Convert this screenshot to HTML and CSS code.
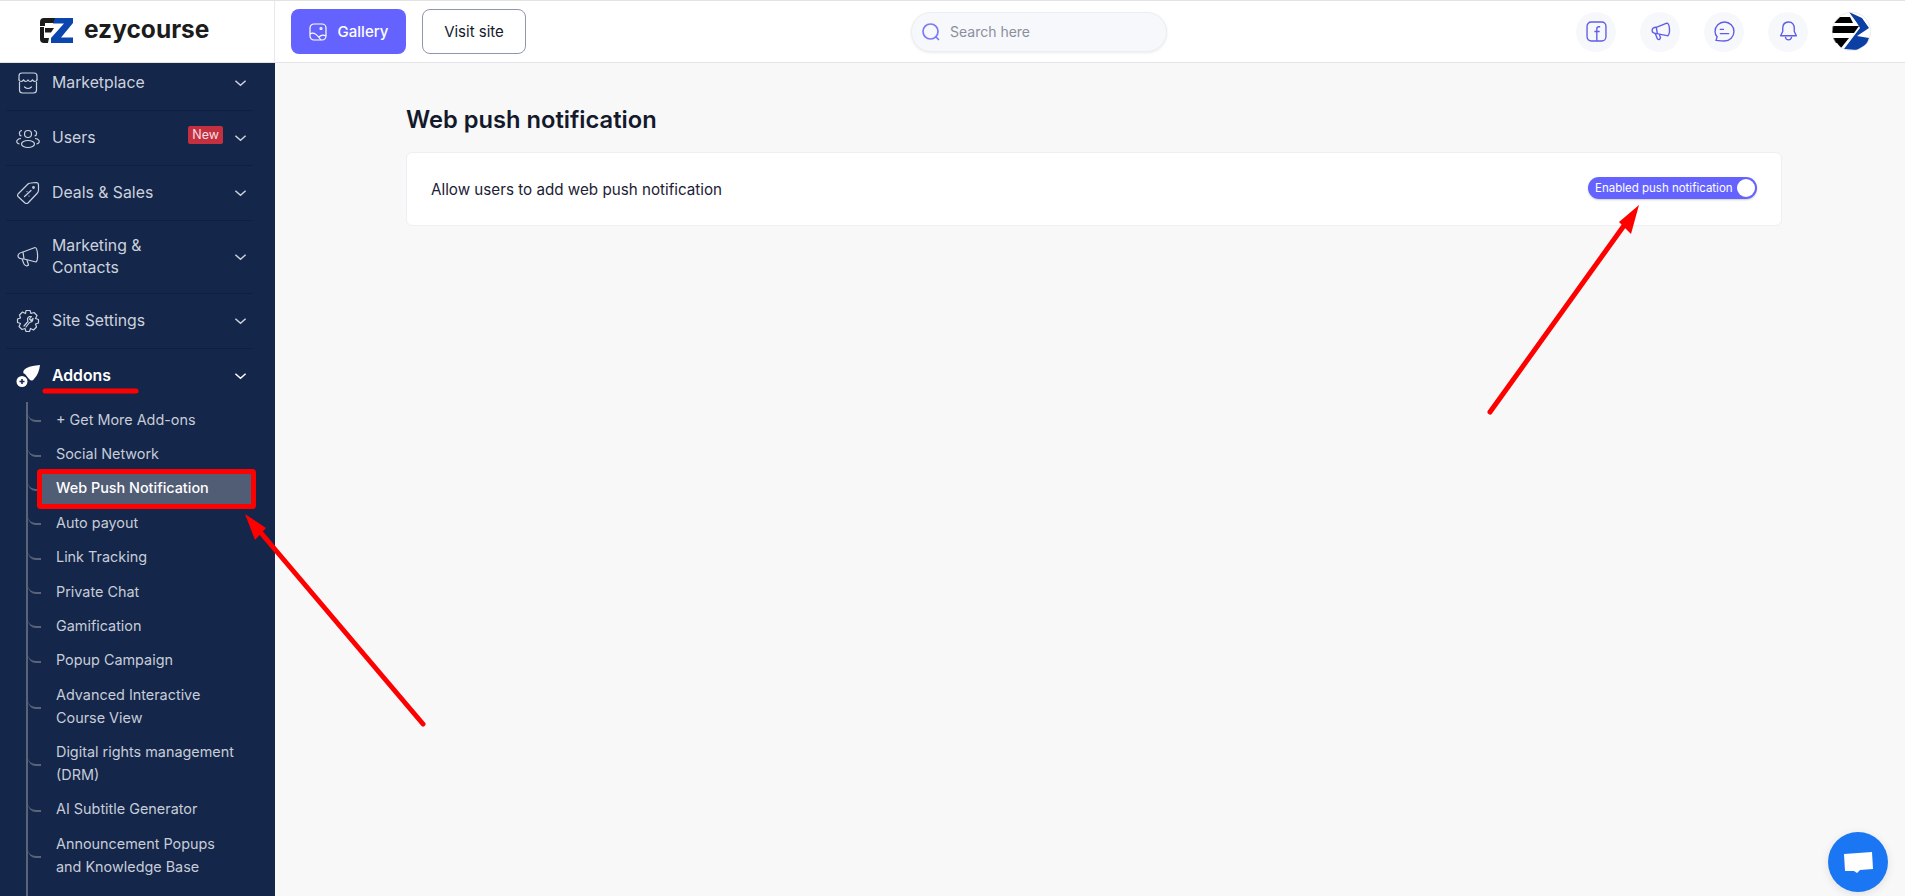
FILE: index.html
```html
<!DOCTYPE html>
<html lang="en">
<head>
    <meta charset="UTF-8">
    <meta name="viewport" content="width=device-width, initial-scale=1.0">
    <title>Web push notification</title>
    <link rel="stylesheet" href="styles.css">
</head>
<body>
    <header class="topbar">
        <div class="brand">
            <svg class="brand-mark" width="34" height="25" viewBox="0 0 34 25">
                <path d="M4 0H17L14 5H5V8H0V4Q0 0 4 0Z" fill="#1c1c1c"/>
                <path d="M5 10H14L11 14.500H5Z" fill="#1c1c1c"/>
                <path d="M0 9H4V20H9L8 25H4Q0 25 0 21Z" fill="#1c1c1c"/>
                <path d="M15 0H33V5L21 19.500H33V25H11V20L24 5.500H13Z" fill="#0b46ae"/>
            </svg>
            <span class="brand-name">ezycourse</span>
        </div>
        <a class="btn btn-primary">
            <svg width="18" height="18" viewBox="0 0 18 18" fill="none" stroke="#fff" stroke-width="1.2">
                <rect x="1" y="1" width="16" height="16" rx="4"/>
                <circle cx="12" cy="5.5" r="1"/>
                <path d="M1 11C5 8 9 13 12 17M10 14C12 12 15 12 17 13"/>
            </svg>
            Gallery
        </a>
        <a class="btn btn-outline">Visit site</a>
        <div class="search">
            <svg width="20" height="20" viewBox="0 0 20 20" fill="none" stroke="#7d78f5" stroke-width="1.7">
                <circle cx="9.5" cy="9.5" r="7.5"/>
                <path d="M15 15L17.5 17.5" stroke-linecap="round"/>
            </svg>
            <span>Search here</span>
        </div>
        <div class="top-actions">
            <span class="round-icon">
                <svg width="21" height="21" viewBox="0 0 20 20" fill="none" stroke="#5f5de8" stroke-width="1.3">
                    <rect x="1" y="1" width="18" height="18" rx="4"/>
                    <path d="M13.5 5.5H12.3Q10.3 5.5 10.3 7.5V19M8 10H13"/>
                </svg>
            </span>
            <span class="round-icon">
                <svg width="21" height="21" viewBox="0 0 20 20" fill="none" stroke="#5f5de8" stroke-width="1.3" stroke-linejoin="round">
                    <path d="M6 6L16 2Q18 2 18.5 7T17 14Q16 14 7 12Z"/>
                    <path d="M6 6Q2 6 2 9T7 12M5 12L7 17Q9 19 10 16L9 13"/>
                </svg>
            </span>
            <span class="round-icon">
                <svg width="21" height="21" viewBox="0 0 20 20" fill="none" stroke="#5f5de8" stroke-width="1.3" stroke-linecap="round">
                    <path d="M10 1C5 1 1 5 1 10Q1 13 3 15L2 18.5Q7 19 10 19C15 19 19 15 19 10S15 1 10 1Z"/>
                    <path d="M6 8H9M6 12H14"/>
                </svg>
            </span>
            <span class="round-icon">
                <svg width="21" height="21" viewBox="0 0 20 20" fill="none" stroke="#5f5de8" stroke-width="1.3" stroke-linejoin="round">
                    <path d="M10 1C6 1 4.500 4 4.500 7V10L2.500 14H17.500L15.500 10V7C15.500 4 14 1 10 1Z"/>
                    <path d="M7 15Q7.500 18 10 18T13 15"/>
                </svg>
            </span>
            <svg class="avatar" width="39" height="39" viewBox="0 0 39 39">
                <defs><clipPath id="avatar-clip"><circle cx="19.500" cy="19.500" r="19.500"/></clipPath></defs>
                <g clip-path="url(#avatar-clip)">
                    <rect width="39" height="39" fill="#fff"/>
                    <path d="M2 11L8 5H18L21 11Z" fill="#000"/>
                    <path d="M0 14H27L22 21H0Z" fill="#000"/>
                    <path d="M0 26H17L13 31H3Z" fill="#000"/>
                    <path d="M5 31H13L9 36Z" fill="#000"/>
                    <path d="M17 0L30 6L37 16L25 24L37 26L35 32L25 38L12 37L28 16L25 11Z" fill="#0b3fa3"/>
                </g>
                <circle cx="19.500" cy="19.500" r="19.200" fill="none" stroke="#ddd" stroke-width="0.600"/>
            </svg>
        </div>
    </header>

    <div class="layout">
        <aside class="sidebar">
            <nav class="menu">
                <div class="menu-row">
                    <svg class="menu-icon" viewBox="0 0 24 24" fill="none" stroke="currentColor" stroke-width="1.200" stroke-linecap="round">
                        <path d="M3 9V5Q3 2 6 2H18Q21 2 21 5V9"/>
                        <path d="M3 9Q5 12 7.500 9Q10 12 12 9Q14 12 16.500 9Q19 12 21 9"/>
                        <path d="M3.500 11V19Q3.500 22 6.500 22H17.500Q20.500 22 20.500 19V11"/>
                        <path d="M8.500 16Q12 19 15.500 16"/>
                    </svg>
                    <span class="menu-label">Marketplace</span>
                    <svg class="chevron" viewBox="0 0 14 8"><path d="M1.500 1.500L7 6.500L12.500 1.500"/></svg>
                </div>
                <div class="menu-row">
                    <svg class="menu-icon" viewBox="0 0 24 24" fill="none" stroke="currentColor" stroke-width="1.200">
                        <circle cx="12" cy="8" r="3.500"/>
                        <ellipse cx="12" cy="18" rx="6.500" ry="3.500"/>
                        <path d="M6 4.500A2.800 2.800 0 0 0 5.500 10M18 4.500A2.800 2.800 0 0 1 18.500 10M3.500 18Q0 17 1 14.500Q2 12.500 5 12.500M20.500 18Q24 17 23 14.500Q22 12.500 19 12.500"/>
                    </svg>
                    <span class="menu-label">Users</span>
                    <span class="badge">New</span>
                    <svg class="chevron" viewBox="0 0 14 8"><path d="M1.500 1.500L7 6.500L12.500 1.500"/></svg>
                </div>
                <div class="menu-row">
                    <svg class="menu-icon" viewBox="0 0 24 24" fill="none" stroke="currentColor" stroke-width="1.200" stroke-linejoin="round">
                        <path d="M2 13L12 3Q13 2 15 2L20 1.500Q22.500 1.500 22.500 4V9Q22.500 11 21 12.500L12 22Q10.500 23 9 22L2 15.500Q1 14.500 2 13Z"/>
                        <circle cx="17.500" cy="6.500" r="0.800"/>
                        <path d="M8.500 15.500L15 9.500M11 10.500V10.600M13 15V15.100" stroke-linecap="round"/>
                    </svg>
                    <span class="menu-label">Deals &amp; Sales</span>
                    <svg class="chevron" viewBox="0 0 14 8"><path d="M1.500 1.500L7 6.500L12.500 1.500"/></svg>
                </div>
                <div class="menu-row menu-row-tall">
                    <svg class="menu-icon" viewBox="0 0 24 24" fill="none" stroke="currentColor" stroke-width="1.200" stroke-linejoin="round">
                        <path d="M7 7L19 2.500Q21 2.500 21.500 9T20 17L8 14Z"/>
                        <path d="M7 7Q2 8 2 11T8 14M6 14L8 19Q10 22 12.500 20L11 15"/>
                    </svg>
                    <span class="menu-label">Marketing &amp;<br>Contacts</span>
                    <svg class="chevron" viewBox="0 0 14 8"><path d="M1.500 1.500L7 6.500L12.500 1.500"/></svg>
                </div>
                <div class="menu-row">
                    <svg class="menu-icon" viewBox="0 0 24 24" fill="none" stroke="currentColor" stroke-width="1.200" stroke-linejoin="round">
                        <path d="M10 1.500H14L15 4.500L18 3.500L21 6.500L19.500 9.500L22.500 10.500V14L19.500 15L20.500 18L17.500 21L14.500 19.500L13.500 22.500H10L9 19.500L6 20.500L3 17.500L4.500 14.500L1.500 13.500V10L4.500 9L3.500 6L6.500 3L9.500 4.500Z"/>
                        <path d="M8 17L12 12.500Q10.500 9 13.500 7.500L15.500 7.500L13.500 10L15 11.500L17 9.500Q17 13 13.500 13.500L10 18" stroke-linecap="round"/>
                    </svg>
                    <span class="menu-label">Site Settings</span>
                    <svg class="chevron" viewBox="0 0 14 8"><path d="M1.500 1.500L7 6.500L12.500 1.500"/></svg>
                </div>
                <div class="menu-row is-open">
                    <svg class="menu-icon" viewBox="0 0 24 24">
                        <path d="M24 1Q11 2 8 6Q6 9 9 10L13 15Q16 18 18 15Q23 10 24 1Z" fill="#fff"/>
                        <circle cx="6" cy="17.500" r="5.500" fill="#fff"/>
                        <path d="M3.500 17.500H8.500M6 15V20" stroke="#142649" stroke-width="1.500"/>
                    </svg>
                    <span class="menu-label">Addons</span>
                    <svg class="chevron" viewBox="0 0 14 8"><path d="M1.500 1.500L7 6.500L12.500 1.500"/></svg>
                </div>
                <ul class="submenu">
                    <li>+ Get More Add-ons</li>
                    <li>Social Network</li>
                    <li class="is-active">Web Push Notification</li>
                    <li>Auto payout</li>
                    <li>Link Tracking</li>
                    <li>Private Chat</li>
                    <li>Gamification</li>
                    <li>Popup Campaign</li>
                    <li>Advanced Interactive<br>Course View</li>
                    <li>Digital rights management<br>(DRM)</li>
                    <li>AI Subtitle Generator</li>
                    <li>Announcement Popups<br>and Knowledge Base</li>
                </ul>
            </nav>
        </aside>

        <main class="content">
            <h1>Web push notification</h1>
            <section class="card">
                <p>Allow users to add web push notification</p>
                <div class="toggle">
                    <span>Enabled push notification</span>
                    <i class="knob"></i>
                </div>
            </section>
        </main>
    </div>

    <!-- red markup drawn over the screenshot -->
    <svg class="markup" width="1905" height="896" viewBox="0 0 1905 896">
        <path d="M45 391H136" stroke="#f00" stroke-width="5" stroke-linecap="round"/>
        <rect x="39.500" y="471.500" width="214" height="35" rx="1" fill="none" stroke="#f00" stroke-width="5"/>
        <path d="M423 724L256 527" stroke="#f00" stroke-width="5" stroke-linecap="round"/>
        <path d="M245 514L266 528L255 540Z" fill="#f00"/>
        <path d="M1490 412L1628 220" stroke="#f00" stroke-width="5" stroke-linecap="round"/>
        <path d="M1639 205L1631 234L1619 222Z" fill="#f00"/>
    </svg>

    <div class="chat-btn">
        <svg width="30" height="26" viewBox="0 0 30 26">
            <path d="M1 5L29 3L30 20L17 21L14 24L11 22L2 22Z" fill="#fff"/>
        </svg>
    </div>
</body>
</html>
```

FILE: styles.css
```css
* {
    box-sizing: border-box;
}
html, body {
    height: 100%;
}
body {
    margin: 0;
    overflow: hidden;
    font-family: Inter, "Noto Sans", sans-serif;
    color: #14192b;
    background-color: #f8f8f9;
    border-top: 1px solid #e2e2e2;
}

/* top bar */
.topbar {
    display: flex;
    align-items: center;
    height: 62px;
    background-color: #fff;
    border-bottom: 1px solid #e4e4e6;
}
.brand {
    display: flex;
    align-items: center;
    gap: 10px;
    flex: 0 0 275px;
    height: 100%;
    padding-left: 40px;
    border-right: 1px solid #e8e8ea;
}
.brand-mark {
    margin-top: -3px;
}
.brand-name {
    margin-top: -5px;
    font-size: 24.5px;
    font-weight: 700;
    line-height: 30px;
    color: #1c1c1c;
}
.btn {
    display: flex;
    align-items: center;
    justify-content: center;
    height: 45px;
    border-radius: 8px;
    font-size: 15px;
}
.btn-primary {
    gap: 11px;
    width: 115px;
    margin-left: 16px;
    color: #fff;
    font-weight: 500;
    background-color: #6563ff;
}
.btn-outline {
    width: 104px;
    margin-left: 16px;
    color: #14192b;
    border: 1px solid #8d97ad;
}
.search {
    display: flex;
    align-items: center;
    gap: 7px;
    width: 256px;
    height: 40px;
    margin-left: 385px;
    padding-left: 9px;
    font-size: 14px;
    color: #8a8f9c;
    background-color: #f7f8fb;
    border: 1px solid #eceef2;
    border-radius: 20px;
    box-shadow: 0 1px 3px rgba(0, 0, 0, 0.08);
}
.search svg {
    margin-right: 2px;
}
.top-actions {
    display: flex;
    align-items: center;
    gap: 24px;
    margin-left: auto;
    padding-right: 34px;
}
.round-icon {
    display: flex;
    align-items: center;
    justify-content: center;
    width: 40px;
    height: 40px;
    border-radius: 50%;
    background-color: #f7f8fb;
}

/* page body */
.layout {
    display: flex;
    height: calc(100% - 62px);
}
.sidebar {
    flex: 0 0 275px;
    overflow: hidden;
    background-color: #142649;
}
.menu {
    margin-top: -7px;
    padding: 0 22px 0 6px;
}
.menu-row {
    display: flex;
    align-items: center;
    height: 55px;
    padding-left: 10px;
    color: #ccd2dd;
    border-bottom: 1px solid #0f1f3e;
}
.menu-row-tall {
    height: 73px;
}
.menu-row.is-open {
    height: 54px;
    color: #fff;
    font-weight: 600;
    border-bottom: none;
}
.menu-icon {
    flex: 0 0 24px;
    width: 24px;
    height: 24px;
}
.menu-label {
    flex: 1;
    margin-left: 12px;
    font-size: 15.8px;
    line-height: 22px;
}
.badge {
    margin: -6px 11px 0 0;
    padding: 0 4px;
    font-size: 12.5px;
    line-height: 18px;
    color: #f6dfe1;
    background-color: #c4303f;
    border-radius: 2px;
}
.chevron {
    flex: 0 0 13px;
    width: 13px;
    height: 8px;
    margin-right: 6px;
    fill: none;
    stroke: currentColor;
    stroke-width: 1.6;
}

/* addon list with the tree line on its left */
.submenu {
    margin: -1px 0 0 20px;
    padding: 0 0 40px;
    list-style: none;
    border-left: 2px solid #5a6478;
}
.submenu li {
    position: relative;
    padding: 5.7px 6px 5.7px 28px;
    font-size: 14.4px;
    line-height: 23px;
    color: #c6ccd8;
}
.submenu li::before {
    content: "";
    position: absolute;
    left: 0;
    top: 50%;
    width: 13px;
    height: 8px;
    margin-top: -7px;
    border-bottom: 2px solid #5a6478;
    border-bottom-left-radius: 8px;
}
.submenu li.is-active {
    margin: 0 2px 0 14px;
    padding-left: 14px;
    color: #fff;
    font-weight: 500;
    background-color: #515c75;
}
.submenu li.is-active::before {
    left: -14px;
}

/* main content */
.content {
    flex: 1;
    padding: 41px 123px 0 131px;
}
h1 {
    margin: 0 0 16px;
    font-size: 23.7px;
    font-weight: 600;
    line-height: 32px;
    color: #14192b;
}
.card {
    display: flex;
    align-items: center;
    justify-content: space-between;
    height: 74px;
    padding: 0 24px;
    background-color: #fff;
    border: 1px solid #eeeef4;
    border-radius: 6px;
}
.card p {
    margin: 0;
    font-size: 15.2px;
    color: #1c2135;
}
.toggle {
    display: flex;
    align-items: center;
    justify-content: space-between;
    width: 169px;
    height: 22px;
    margin-top: -3px;
    padding: 0 2px 0 7px;
    font-size: 11.5px;
    color: #fff;
    background-color: #6563ff;
    border-radius: 11px;
    box-shadow: 0 1px 2px rgba(0, 0, 0, 0.2);
}
.knob {
    width: 18px;
    height: 18px;
    background-color: #fff;
    border-radius: 50%;
}

/* things lying over the page */
.markup {
    position: absolute;
    left: 0;
    top: 0;
    pointer-events: none;
}
.chat-btn {
    position: fixed;
    left: 1828px;
    top: 832px;
    display: flex;
    align-items: center;
    justify-content: center;
    width: 60px;
    height: 60px;
    background-color: #1a76f2;
    border-radius: 50%;
    box-shadow: 0 2px 8px rgba(0, 0, 0, 0.1);
}
```
